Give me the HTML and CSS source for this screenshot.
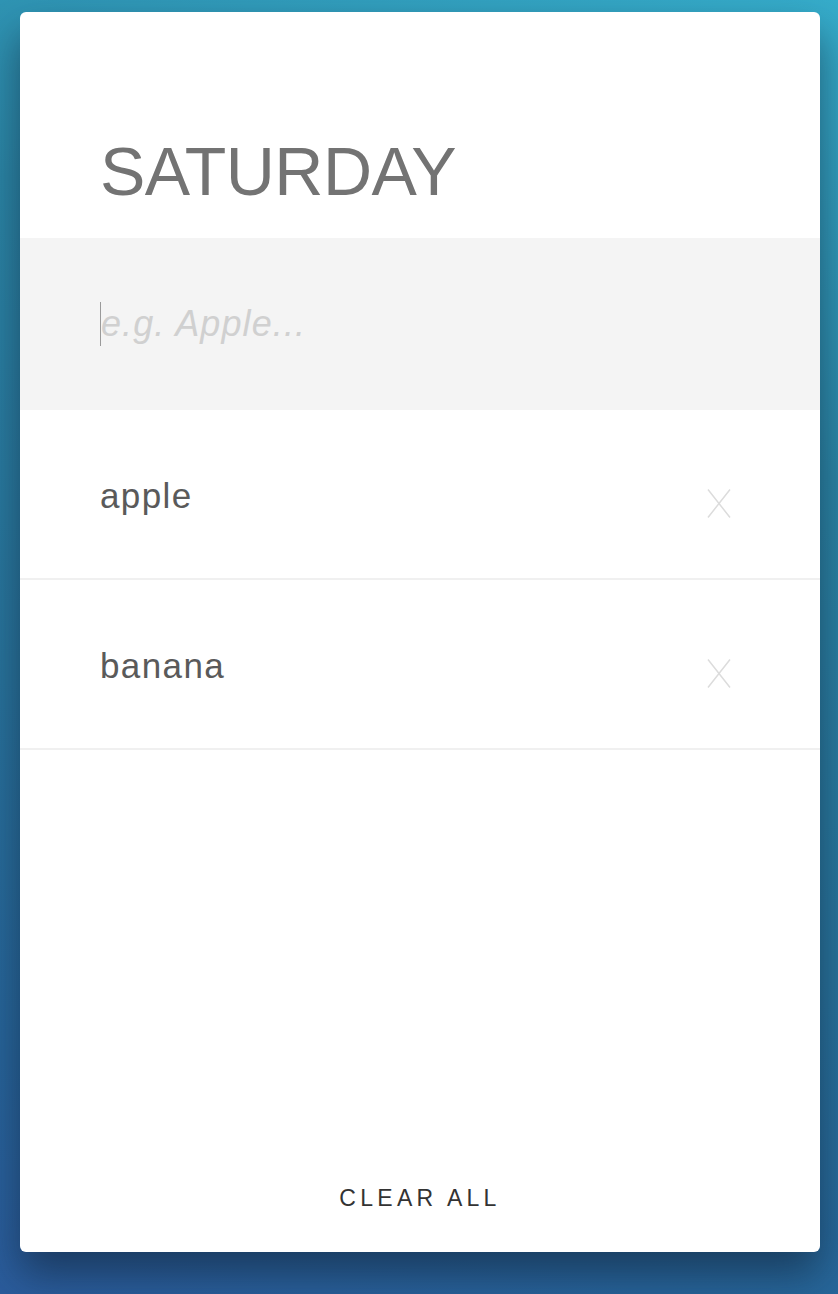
FILE: index.html
```html
<!DOCTYPE html>
<html lang="en">
<head>
<meta charset="utf-8">
<title>Saturday</title>
<link rel="stylesheet" href="styles.css">
</head>
<body>
<div class="page">
  <div class="card">
    <header class="card-header">
      <h1 class="day">SATURDAY</h1>
    </header>
    <div class="entry">
      <input class="entry-input" type="text" placeholder="e.g. Apple...">
      <span class="caret"></span>
    </div>
    <ul class="items">
      <li class="item">
        <span class="item-name">apple</span>
        <button class="remove" aria-label="remove">
          <svg width="24" height="29" viewBox="0 0 24 29"><path d="M1 0.5 L23 28.5 M23 0.5 L1 28.5" stroke="#dcdcdc" stroke-width="1.5" fill="none"/></svg>
        </button>
      </li>
      <li class="item">
        <span class="item-name">banana</span>
        <button class="remove" aria-label="remove">
          <svg width="24" height="29" viewBox="0 0 24 29"><path d="M1 0.5 L23 28.5 M23 0.5 L1 28.5" stroke="#dcdcdc" stroke-width="1.5" fill="none"/></svg>
        </button>
      </li>
    </ul>
    <div class="spacer"></div>
    <footer class="card-footer">
      <button class="clear">CLEAR ALL</button>
    </footer>
  </div>
</div>
</body>
</html>
```

FILE: styles.css
```css
html, body {
  margin: 0;
  padding: 0;
}
body {
  width: 838px;
  height: 1294px;
  overflow: hidden;
  font-family: "Liberation Sans", Arial, sans-serif;
  background: linear-gradient(200deg, #36adcb 0%, #2b86a6 30%, #28749c 60%, #27649a 85%, #2b5c9c 100%);
}
.page {
  padding: 12px 18px 0 20px;
}
.card {
  width: 800px;
  height: 1240px;
  background: #fff;
  border-radius: 6px;
  display: flex;
  flex-direction: column;
  box-shadow: 0 22px 40px rgba(14, 30, 50, 0.55);
}
.card-header {
  padding: 119px 80px 27px;
}
.day {
  margin: 0;
  font-weight: normal;
  font-size: 68px;
  line-height: 80px;
  color: #737373;
  letter-spacing: -0.5px;
}
.entry {
  position: relative;
  height: 172px;
  background: #f4f4f4;
  display: flex;
  align-items: center;
}
.entry-input {
  width: 100%;
  border: none;
  outline: none;
  background: transparent;
  padding: 0 80px 0 81px;
  font-family: "Liberation Sans", Arial, sans-serif;
  font-size: 36px;
  letter-spacing: 1.1px;
  line-height: 44px;
  height: 44px;
  color: #555;
}
.entry-input::placeholder {
  color: #d0d0d0;
  font-style: italic;
}
.caret {
  position: absolute;
  left: 80px;
  top: 64px;
  width: 1px;
  height: 44px;
  background: #9a9a9a;
}
.items {
  list-style: none;
  margin: 0;
  padding: 0;
}
.item {
  height: 168px;
  border-bottom: 2px solid #f0f0f0;
  display: flex;
  align-items: center;
  justify-content: space-between;
  padding: 0 89px 0 80px;
}
.item-name {
  font-size: 35px;
  letter-spacing: 1.4px;
  line-height: 40px;
  padding-top: 4px;
  color: #5a5a5a;
}
.remove {
  border: none;
  background: transparent;
  padding: 0;
  margin-top: 18px;
  display: flex;
}
.spacer {
  flex: 1;
}
.card-footer {
  display: flex;
  justify-content: center;
  padding-bottom: 39px;
}
.clear {
  border: none;
  background: transparent;
  padding: 0;
  font-family: "Liberation Sans", Arial, sans-serif;
  font-size: 23px;
  line-height: 30px;
  letter-spacing: 4.3px;
  color: #333;
}
```
